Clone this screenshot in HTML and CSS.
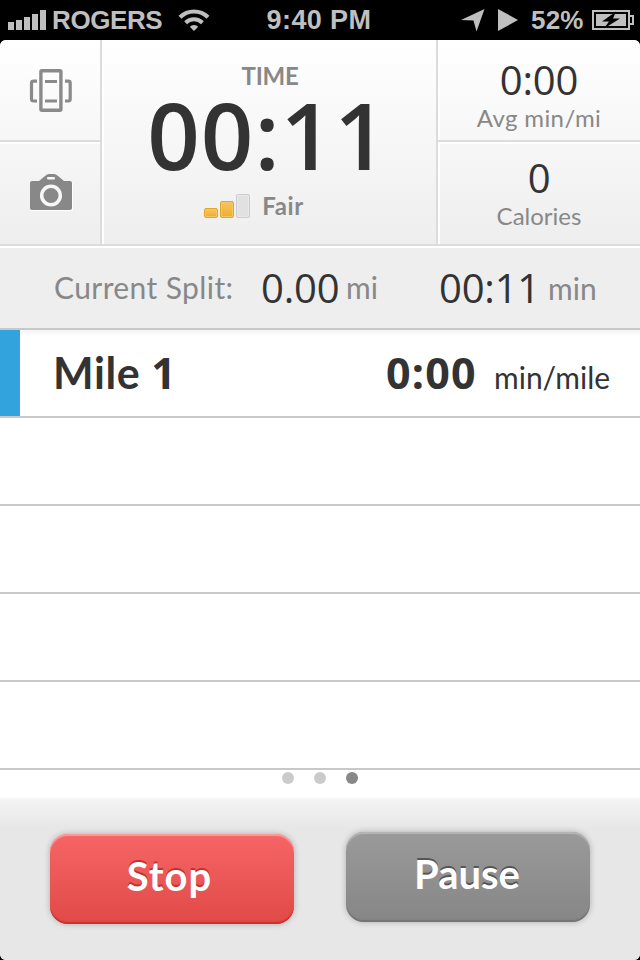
FILE: index.html
```
<!DOCTYPE html>
<html lang="en">
<head>
<meta charset="utf-8">
<title>Run tracker</title>
<link rel="stylesheet" href="styles.css">
</head>
<body>
<div class="screen">
  <header class="status">
    <div class="status-left">
      <svg class="signal" width="38" height="20" viewBox="0 0 38 20" fill="#bfbfbf"><path d="M0 12h6v8H0zM8 10h6v10H8zM16 7h6v13h-6zM24 4h6v16h-6zM32 0h6v20h-6z"/></svg>
      <span class="carrier">ROGERS</span>
      <svg class="wifi" width="32" height="24" viewBox="0 0 32 24" fill="none" stroke="#bfbfbf"><path d="M2 9.200a20 20 0 0 1 28 0" stroke-width="4.200"/><path d="M7.600 14.800a12 12 0 0 1 16.800 0" stroke-width="4"/><path d="M16 23l-4.200-4.300a6 6 0 0 1 8.400 0z" fill="#bfbfbf" stroke="none"/></svg>
    </div>
    <span class="clock">9:40 PM</span>
    <div class="status-right">
      <svg width="24" height="23" viewBox="0 0 24 23" fill="#bfbfbf"><path d="M23.500 0L15.500 22.500 12.500 11.500 0 11z"/></svg>
      <svg class="play" width="20" height="22" viewBox="0 0 20 22" fill="#bfbfbf"><path d="M0 0l20 11L0 22z"/></svg>
      <span class="percent">52%</span>
      <svg class="battery" width="42" height="20" viewBox="0 0 42 20"><path d="M1 1h36v18H1zM38 6h3v8h-3" fill="none" stroke="#bfbfbf" stroke-width="2"/><path d="M4 4h30v12H4z" fill="#bfbfbf"/><path d="M24 1.500L10 11.500h7l-5 7L28 8.500h-7l3-7z" fill="#000"/></svg>
    </div>
  </header>
  <main class="app">
    <section class="stats">
      <div class="side">
        <div class="cell">
          <svg width="44" height="44" viewBox="0 0 44 44" fill="none" stroke="#8a8a8a"><rect x="11.900" y="1.700" width="20" height="39.600" rx="1" stroke-width="3.400"/><path d="M16 12.500h12M16 32h12" stroke-width="3"/><path d="M8 12.200H4.700Q2.500 12.200 2.500 14V30Q2.500 32 4.700 32H8M36 12.200h3.300q1.900 0 1.900 1.800V30q0 2-1.900 2H36" stroke-width="3.200"/></svg>
        </div>
        <div class="cell lower">
          <svg width="44" height="38" viewBox="0 0 44 38"><path d="M2 8h7l6-5q2-2 4-2h6q2 0 4 2l6 5h6q2 0 2 2v25q0 2-2 2H2q-2 0-2-2V10q0-2 2-2z" fill="#fff"/><path d="M2 7h7l6-5q2-2 4-2h5q2 0 4 2l6 5h6q2 0 2 2v25q0 2-2 2H2q-2 0-2-2V9q0-2 2-2z" fill="#888"/><circle cx="21" cy="21.500" r="9.300" fill="none" stroke="#f7f7f7" stroke-width="3.500"/><rect x="17" y="3" width="8" height="2.500" rx="1" fill="#f7f7f7"/></svg>
        </div>
      </div>
      <div class="time-panel">
        <span class="time-label">TIME</span>
        <span class="time">00:11</span>
        <div class="gps"><i class="bar bar-low"></i><i class="bar bar-mid"></i><i class="bar bar-off"></i><span class="fair">Fair</span></div>
      </div>
      <div class="side">
        <div class="cell metric"><span class="value pace">0:00</span><span class="unit avg">Avg min/mi</span></div>
        <div class="cell lower metric"><span class="value cal">0</span><span class="unit calories">Calories</span></div>
      </div>
    </section>
    <section class="split">
      <span class="split-label">Current Split:</span>
      <span class="split-value dist">0.00</span>
      <span class="split-unit mi">mi</span>
      <span class="split-value dur">00:11</span>
      <span class="split-unit min">min</span>
    </section>
    <section class="laps">
      <div class="lap current"><span class="mile">Mile <b>1</b></span><span class="lap-pace">0:00</span><span class="lap-unit">min/mile</span></div>
      <div class="lap"></div><div class="lap"></div><div class="lap"></div><div class="lap"></div>
    </section>
    <nav class="dots"><i></i><i></i><i class="on"></i></nav>
    <footer class="actions">
      <button class="btn stop"><span>Stop</span></button>
      <button class="btn pause"><span>Pause</span></button>
    </footer>
  </main>
</div>
</body>
</html>
```
FILE: styles.css
```
* { box-sizing: border-box; }
body { margin: 0; background: #000; font-family: Lato, "Liberation Sans", sans-serif; color: #333; }
svg { display: block; flex: none; }
span { white-space: nowrap; }
.screen { width: 640px; height: 960px; overflow: hidden; background: #000; }

.status { height: 40px; display: grid; grid-template-columns: 218px 1fr 218px; font: bold 26px/40px "Liberation Sans", Arial, sans-serif; color: #bfbfbf; }
.status-left { display: flex; align-items: center; padding-left: 8px; }
.carrier { margin-left: 6px; width: 112px; letter-spacing: -.4px; }
.wifi { margin-left: 14px; }
.clock { text-align: center; font-size: 27px; letter-spacing: .4px; padding-right: 2px; }
.status-right { display: flex; align-items: center; padding-left: 39px; }
.play { margin-left: 13px; }
.percent { margin-left: 13px; width: 54px; letter-spacing: .2px; }
.battery { margin-left: 7px; }

.app { height: 920px; background: #fff; border-radius: 6px; overflow: hidden; display: flex; flex-direction: column; }
.stats { height: 208px; flex: none; display: grid; grid-template-columns: 102px 336px 202px; background: linear-gradient(#fff, #eee); border-bottom: 2px solid #fff; box-shadow: inset 0 -2px #dcdcdc; }
.side { display: grid; grid-template-rows: 102px 102px; }
.cell { border-bottom: 2px solid #dcdcdc; padding: 29px 0 0 29px; }
.cell.lower { border-top: 2px solid #fff; border-bottom: 0; padding: 30px 0 0 30px; }
.time-panel { height: 204px; border: solid #dcdcdc; border-width: 0 2px; margin-left: -2px; box-shadow: inset 2px 0 #fff; display: flex; flex-direction: column; align-items: center; }
.time-label { font-weight: 700; font-size: 24px; line-height: 30px; color: #888; margin-top: 21px; letter-spacing: -.3px; padding-left: 2px; }
.time { font-family: "Open Sans", sans-serif; font-weight: 600; font-size: 92px; line-height: 92px; margin: -2px 3px 0 0; letter-spacing: 1px; }
.gps { display: flex; align-items: flex-end; gap: 2px; height: 24px; margin: 13px 30px 0 0; }
.bar { width: 14px; border-radius: 2px; border: 1px solid #e2a52b; background: linear-gradient(#f5c661, #eeae2a); box-shadow: inset 0 0 0 1px #f5c667; }
.bar-low { height: 10px; }
.bar-mid { height: 17px; }
.bar-off { height: 24px; background: #e1e1e1; border-color: #ccc; box-shadow: inset 0 0 0 1px #e8e8e8; }
.fair { font-weight: 700; font-size: 24px; line-height: 24px; color: #888; margin-left: 10px; letter-spacing: .6px; }
.metric, .cell.lower.metric { padding: 20px 0 0; display: flex; flex-direction: column; align-items: center; box-shadow: inset 2px 0 #fff; }
.cell.lower.metric { padding-top: 14px; }
.value { font-family: "Open Sans", sans-serif; font-size: 40px; line-height: 40px; letter-spacing: -.2px; }
.unit { font-size: 24px; line-height: 36px; color: #888; }
.avg { letter-spacing: .4px; }

.split { height: 82px; flex: none; background: #eee; border-bottom: 2px solid #c8c8c8; display: grid; grid-template-columns: 207px 85px 93px 109px 1fr; padding-left: 54px; align-items: center; }
.split-label, .split-unit { font-size: 30px; line-height: 40px; color: #888; }
.split-label { letter-spacing: .4px; }
.split-label, .mi { margin-top: -2px; }
.split-value { font-family: "Open Sans", sans-serif; font-size: 40px; line-height: 40px; letter-spacing: -.2px; }

.laps { flex: none; background: linear-gradient(#f3f3f3, #fff 6px); }
.lap { height: 88px; border-bottom: 2px solid #c8c8c8; }
.current { background: linear-gradient(#32a3dc, #32a3dc) 0 0 / 20px 86px no-repeat; display: grid; grid-template-columns: 333px 108px 1fr; padding-left: 53px; align-items: baseline; }
.mile, .lap-pace { font-weight: 700; font-size: 43px; line-height: 86px; letter-spacing: .6px; }
.mile b, .lap-pace { font-family: "Open Sans", sans-serif; font-weight: 700; line-height: 1; }
.lap-pace { letter-spacing: 1.2px; }
.lap-unit { font-size: 30px; }

.dots { height: 30px; flex: none; display: flex; justify-content: center; gap: 20px; padding-top: 2px; background: linear-gradient(#fff 26px, #f4f4f4); }
.dots i { width: 12px; height: 12px; border-radius: 50%; background: #cbcbcb; }
.dots .on { background: #888; }
.actions { flex: 1; background: linear-gradient(#f3f3f3, #e7e7e7 28px); display: flex; gap: 52px; padding: 34px 50px 0; }
.btn { width: 244px; height: 90px; border: 0; border-radius: 18px; padding: 0 5px 6px 0; color: #fff; font: 700 40px/84px Lato, sans-serif; }
.stop { letter-spacing: 1px; background: linear-gradient(#f66565, #e04a47); box-shadow: inset 0 2px 1px #ff9a9a, inset 0 -2px 1px #cc302f, 0 0 6px rgba(0,0,0,.25); text-shadow: 0 -2px #c23030; }
.pause { margin-top: -2px; padding-right: 2px; background: linear-gradient(#9a9a9a, #868686); box-shadow: inset 0 2px 1px #b5b5b5, inset 0 -2px 1px #747474, 0 0 6px rgba(0,0,0,.25); text-shadow: 0 -2px #555; }
```
